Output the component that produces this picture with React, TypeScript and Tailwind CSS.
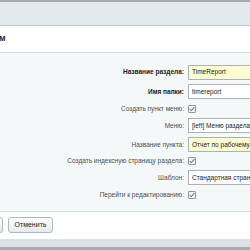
import React from 'react';

const font = { fontFamily: '"Liberation Sans", Arial, sans-serif' };

function Check() {
  return (
    <span className="flex h-[8px] w-[8px] items-center justify-center rounded-[1px] border border-[#8d979c] bg-[#eef2f3]">
      <svg viewBox="0 0 8 8" className="h-[6px] w-[6px]">
        <path d="M1 4.2 L3 6.2 L7 1.6" fill="none" stroke="#3f4a50" strokeWidth="1.3" />
      </svg>
    </span>
  );
}

type Row =
  | { label: string; bold?: boolean; kind: 'input'; value: string; yellow?: boolean; h: string }
  | { label: string; bold?: boolean; kind: 'check'; h: string };

const rows: Row[] = [
  { label: 'Название раздела:', bold: true, kind: 'input', value: 'TimeReport', yellow: true, h: 'h-[20px]' },
  { label: 'Имя папки:', bold: true, kind: 'input', value: 'timereport', h: 'h-[19px]' },
  { label: 'Создать пункт меню:', kind: 'check', h: 'h-[15px]' },
  { label: 'Меню:', kind: 'input', value: '[left] Меню раздела', h: 'h-[19px]' },
  { label: 'Название пункта:', kind: 'input', value: 'Отчет по рабочему времени', yellow: true, h: 'h-[19px]' },
  { label: 'Создать индексную страницу раздела:', kind: 'check', h: 'h-[14px]' },
  { label: 'Шаблон:', kind: 'input', value: 'Стандартная страница', h: 'h-[19px]' },
  { label: 'Перейти к редактированию:', kind: 'check', h: 'h-[15px]' },
];

export default function App() {
  return (
    <div className="relative h-[250px] w-[250px] overflow-hidden bg-white" style={font}>
      <div className="h-[2px] bg-[#a3acb0]" />
      <div className="h-[24px] border-b border-[#c3cbce] bg-[#e2eaec]" />
      <div className="flex h-[27px] items-center border-b border-[#d3dadc] bg-white">
        <span className="-ml-[1px] text-[9px] font-bold text-[#2b2b2b]">м</span>
      </div>
      <div className="h-[159px] border-b border-[#d6dde0] bg-[#f4f8f8] pt-[9px]">
        {rows.map((r) => (
          <div key={r.label} className={`flex items-center ${r.h}`}>
            <div
              className={`w-[184px] shrink-0 whitespace-nowrap text-right text-[6.5px] ${
                r.bold ? 'font-bold text-[#222]' : 'text-[#4b4f52]'
              }`}
            >
              {r.label}
            </div>
            <div className="ml-[4px] flex">
              {r.kind === 'check' ? (
                <Check />
              ) : (
                <div
                  className={`flex h-[15px] w-[120px] shrink-0 items-center overflow-hidden whitespace-nowrap border border-[#a9b2b7] pl-[3px] text-[6.5px] text-[#222] ${
                    r.yellow ? 'bg-[#fdfcd3]' : 'bg-white'
                  }`}
                >
                  {r.value}
                </div>
              )}
            </div>
          </div>
        ))}
      </div>
      <div className="flex h-[27px] items-start gap-[5px] bg-white pt-[5px]">
        <button className="-ml-[42px] h-[16px] w-[45px] rounded-[3px] border border-[#b0b8bc] bg-gradient-to-b from-white to-[#e6eaec] text-[7px] text-[#222]">
          Сохранить
        </button>
        <button className="h-[16px] w-[45px] rounded-[3px] border border-[#b0b8bc] bg-gradient-to-b from-white to-[#e6eaec] text-[7px] text-[#222]">
          Отменить
        </button>
      </div>
      <div className="h-[8px] bg-[#dbe3e6]" />
      <div className="h-[3px] bg-[#a3acb0]" />
    </div>
  );
}
